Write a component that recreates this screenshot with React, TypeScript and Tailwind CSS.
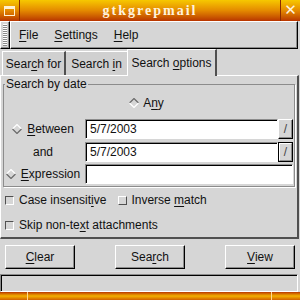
import React from 'react';

// GTK1-style bevels
const raised =
  'border border-t-white border-l-white border-r-black border-b-black shadow-[inset_-1px_-1px_0_#8c8c8c]';
const sunken =
  'border border-t-[#8c8c8c] border-l-[#8c8c8c] border-r-white border-b-white shadow-[inset_1px_1px_0_#000]';

function Mn({ text, at }: { text: string; at: number }) {
  return (
    <span className="whitespace-pre">
      {text.slice(0, at)}
      <span className="underline decoration-1 underline-offset-2">{text[at]}</span>
      {text.slice(at + 1)}
    </span>
  );
}

function Radio({ on }: { on?: boolean }) {
  const top = on ? '#6a6a6a' : '#ffffff';
  const bottom = on ? '#ffffff' : '#6a6a6a';
  return (
    <svg width="10" height="10" viewBox="0 0 10 10" className="shrink-0">
      <polyline points="0.5,5 5,0.5 9.5,5" fill="none" stroke={top} strokeWidth="1.2" />
      <polyline points="0.5,5 5,9.5 9.5,5" fill="none" stroke={bottom} strokeWidth="1.2" />
    </svg>
  );
}

function Check({ on }: { on?: boolean }) {
  return (
    <div
      className={
        'w-[9px] h-[9px] shrink-0 border ' +
        (on
          ? 'border-t-[#505050] border-l-[#505050] border-r-white border-b-white'
          : 'border-t-white border-l-white border-r-[#505050] border-b-[#505050]')
      }
    />
  );
}

export default function App() {
  return (
    <div className="w-[300px] h-[300px] overflow-hidden bg-[#d6d6d6] text-[12px] leading-none text-[#111] flex flex-col font-['Liberation_Sans',Arial,sans-serif]">
      {/* Title bar */}
      <div className="h-[21px] flex bg-linear-to-b from-[#f6c800] via-[#e48a00] to-[#b83400]">
        <div className="w-[20px] border-r border-[#8a2a00] flex items-center justify-center">
          <div className="w-[11px] h-[10px] border border-[#fff0d0] border-t-[3px]" />
        </div>
        <div className="flex-1 flex items-center justify-center font-['Liberation_Serif',serif] font-bold text-[14px] tracking-[2px] text-[#fff2dc]">
          gtkgrepmail
        </div>
        <div className="w-[20px] border-l border-[#8a2a00] flex items-center justify-center text-[#fff2dc] font-bold text-[15px] font-['DejaVu_Sans',sans-serif]">
          ✕
        </div>
      </div>

      {/* Menu bar */}
      <div className="h-[28px] flex">
        <div className={'w-[10px] flex justify-center py-[2px] ' + raised}>
          <div className="w-[4px] h-full bg-[repeating-linear-gradient(to_bottom,#ffffff_0_1px,#8a8a8a_1px_2px)]" />
        </div>
        <div className={'flex-1 mr-[2px] flex items-center pl-[7px] gap-[14px] ' + raised}>
          <span className="px-[1px]"><Mn text="File" at={0} /></span>
          <span className="px-[1px]"><Mn text="Settings" at={0} /></span>
          <span className="px-[1px]"><Mn text="Help" at={0} /></span>
        </div>
      </div>

      {/* Tabs */}
      <div className="h-[26px] flex items-end pl-[2px]">
        <div className="h-[24px] w-[64px] flex items-center justify-center bg-[#d0d0d0] border-l border-t border-white border-r-[2px] border-r-[#505050]">
          <Mn text="Search for" at={4} />
        </div>
        <div className="h-[24px] w-[61px] flex items-center justify-center bg-[#d0d0d0] border-t border-white">
          <Mn text="Search in" at={7} />
        </div>
        <div className="h-[27px] w-[90px] -mb-px relative z-10 flex items-center justify-center bg-[#d6d6d6] border-l border-t border-white border-r-[2px] border-r-[#505050]">
          <Mn text="Search options" at={7} />
        </div>
      </div>

      {/* Notebook page */}
      <div className="h-[164px] w-[299px] border-t border-l border-white border-r-[2px] border-r-[#505050] border-b-[2px] border-b-[#505050] flex flex-col">
        <fieldset className="mx-[2px] mt-[2px] h-[109px] border border-[#8c8c8c] shadow-[1px_1px_0_#fff] pr-[1px]">
          <legend className="ml-[1px] px-[1px]">Search by date</legend>
          <div className="h-[20px] mt-[3px] flex items-center justify-center gap-[4px] pr-[4px]">
            <Radio on />
            <Mn text="Any" at={1} />
          </div>
          <div className="h-[20px] mt-[6px] flex items-center">
            <div className="w-[78px] flex items-center justify-center gap-[5px]">
              <Radio />
              <Mn text="Between" at={0} />
            </div>
            <div className={'ml-[3px] flex-1 h-[20px] bg-white flex items-center pl-[4px] ' + sunken}>5/7/2003</div>
            <div className={'w-[15px] h-[20px] flex items-center justify-center text-[#444] ' + raised}>/</div>
          </div>
          <div className="h-[20px] mt-[3px] flex items-center">
            <div className="w-[78px] flex items-center justify-center">and</div>
            <div className={'ml-[3px] flex-1 h-[20px] bg-white flex items-center pl-[4px] ' + sunken}>5/7/2003</div>
            <div className="w-[15px] h-[20px] border border-black">
              <div className="w-full h-full flex items-center justify-center text-[#444] border-t border-l border-white border-r border-b border-r-[#8c8c8c] border-b-[#8c8c8c]">/</div>
            </div>
          </div>
          <div className="h-[20px] mt-[2px] flex items-center">
            <div className="w-[78px] flex items-center justify-center gap-[5px]">
              <Radio />
              <Mn text="Expression" at={0} />
            </div>
            <div className={'ml-[3px] flex-1 h-[20px] bg-white ' + sunken} />
          </div>
        </fieldset>

        <div className="h-[20px] mt-[3px] flex items-center pl-[4px]">
          <Check on />
          <span className="ml-[5px]"><Mn text="Case insensitive" at={13} /></span>
          <div className="ml-[12px]"><Check /></div>
          <span className="ml-[4px]"><Mn text="Inverse match" at={8} /></span>
        </div>
        <div className="h-[20px] mt-[5px] flex items-center pl-[4px]">
          <Check on />
          <span className="ml-[5px]"><Mn text="Skip non-text attachments" at={11} /></span>
        </div>
      </div>

      {/* Buttons */}
      <div className="h-[24px] mt-[6px] flex justify-between px-[5px]">
        <div className={'w-[70px] flex items-center justify-center ' + raised}><Mn text="Clear" at={0} /></div>
        <div className={'w-[70px] flex items-center justify-center ' + raised}><Mn text="Search" at={3} /></div>
        <div className={'w-[70px] flex items-center justify-center ' + raised}><Mn text="View" at={0} /></div>
      </div>

      {/* Status bar */}
      <div className={'h-[18px] mt-[5px] mr-[2px] ' + sunken} />

      {/* Bottom frame */}
      <div className="h-[8px] flex bg-linear-to-b from-[#b83400] via-[#f2b000] to-[#d06000]">
        <div className="w-[28px] border-r border-[#ffd890]" />
        <div className="flex-1 border-r border-[#ffd890]" />
        <div className="w-[28px]" />
      </div>
    </div>
  );
}
